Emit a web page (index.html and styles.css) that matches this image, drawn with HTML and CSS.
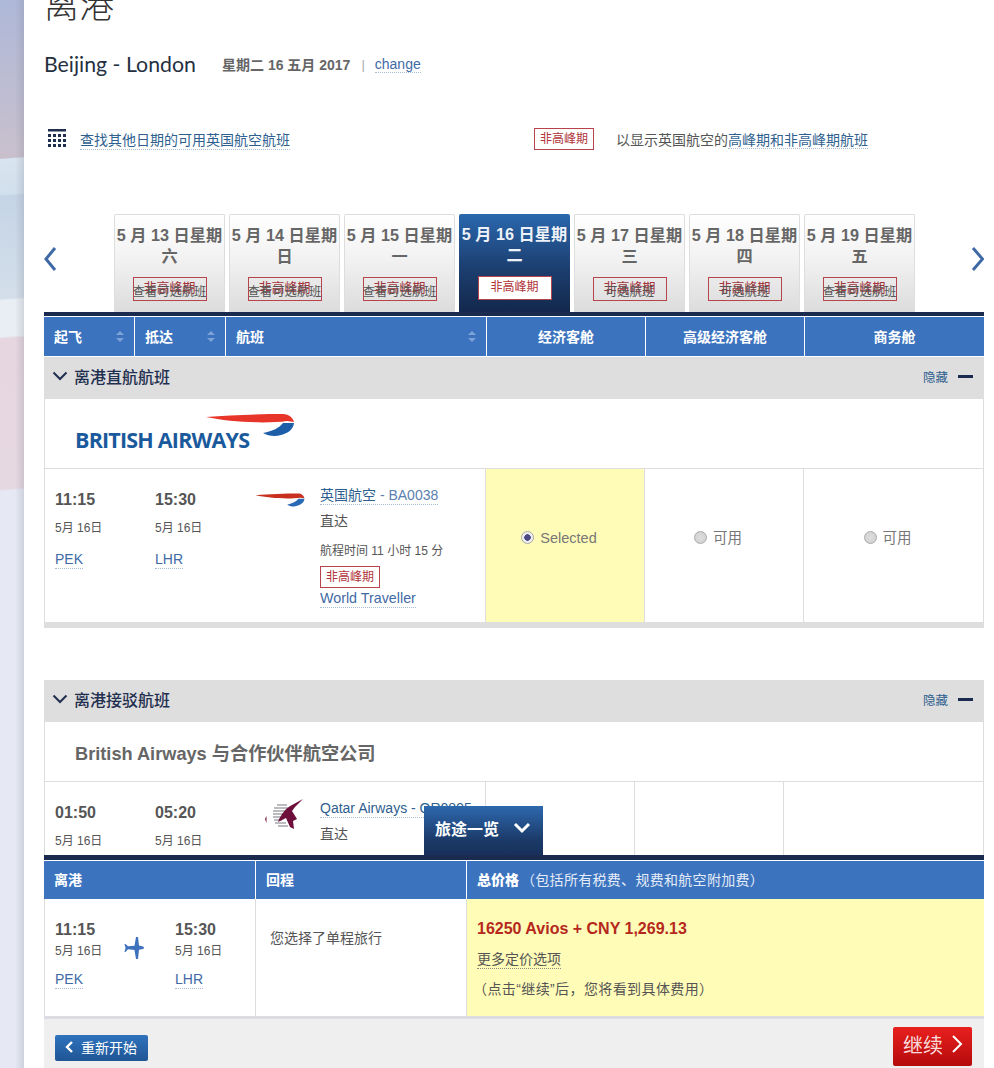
FILE: index.html
```html
<!DOCTYPE html>
<html lang="zh-CN">
<head>
  <meta charset="UTF-8" />
  <meta name="viewport" content="width=device-width, initial-scale=1" />
  <title>离港</title>
  <link rel="stylesheet" href="styles.css">
</head>
<body>
<div class="page">
  <div class="side"></div>
  <div class="main">

    <h1 class="title">离港</h1>

    <div class="route">
      <span class="route-name">Beijing - London</span>
      <span class="route-date">星期二 16 五月 2017</span>
      <span class="route-sep">|</span>
      <a class="link">change</a>
    </div>

    <div class="finder">
      <div class="finder-left">
        <svg class="cal" width="18" height="18" viewBox="0 0 18 18">
          <rect x="0" y="0" width="18" height="2.5" fill="#1f2f4f"/>
          <g fill="#1f2f4f">
            <rect x="0" y="5" width="3" height="3"/><rect x="5" y="5" width="3" height="3"/><rect x="10" y="5" width="3" height="3"/><rect x="15" y="5" width="3" height="3"/>
            <rect x="0" y="10" width="3" height="3"/><rect x="5" y="10" width="3" height="3"/><rect x="10" y="10" width="3" height="3"/><rect x="15" y="10" width="3" height="3"/>
            <rect x="0" y="15" width="3" height="3"/><rect x="5" y="15" width="3" height="3"/><rect x="10" y="15" width="3" height="3"/><rect x="15" y="15" width="3" height="3"/>
          </g>
        </svg>
        <a class="link link-dark">查找其他日期的可用英国航空航班</a>
      </div>
      <div class="finder-right">
        <span class="badge">非高峰期</span>
        <span class="finder-note">以显示英国航空的<a class="link link-dark">高峰期和非高峰期航班</a></span>
      </div>
    </div>

    <div class="dates">
      <svg class="arrow" width="14" height="26" viewBox="0 0 14 26"><path d="M11 2 L2 13 L11 24" fill="none" stroke="#3f6aa6" stroke-width="3"/></svg>
      <div class="tabs">
        <div class="tab">
          <div class="tab-date">5 月 13 日星期六</div>
          <div class="tab-box"><span>非高峰期</span><em>查看可选航班</em></div>
        </div>
        <div class="tab">
          <div class="tab-date">5 月 14 日星期日</div>
          <div class="tab-box"><span>非高峰期</span><em>查看可选航班</em></div>
        </div>
        <div class="tab">
          <div class="tab-date">5 月 15 日星期一</div>
          <div class="tab-box"><span>非高峰期</span><em>查看可选航班</em></div>
        </div>
        <div class="tab tab-active">
          <div class="tab-date">5 月 16 日星期二</div>
          <div class="tab-box"><span>非高峰期</span></div>
        </div>
        <div class="tab">
          <div class="tab-date">5 月 17 日星期三</div>
          <div class="tab-box"><span>非高峰期</span><em>可选航班</em></div>
        </div>
        <div class="tab">
          <div class="tab-date">5 月 18 日星期四</div>
          <div class="tab-box"><span>非高峰期</span><em>可选航班</em></div>
        </div>
        <div class="tab">
          <div class="tab-date">5 月 19 日星期五</div>
          <div class="tab-box"><span>非高峰期</span><em>查看可选航班</em></div>
        </div>
      </div>
      <svg class="arrow" width="14" height="26" viewBox="0 0 14 26"><path d="M3 2 L12.500 13 L3 24" fill="none" stroke="#3f6aa6" stroke-width="3"/></svg>
    </div>

    <div class="results">
      <div class="thead">
        <div class="th th-dep">起飞<i class="sort"></i></div>
        <div class="th th-arr">抵达<i class="sort"></i></div>
        <div class="th th-flight">航班<i class="sort"></i></div>
        <div class="th th-cabin">经济客舱</div>
        <div class="th th-cabin">高级经济客舱</div>
        <div class="th th-cabin th-last">商务舱</div>
      </div>

      <div class="group-head">
        <svg width="16" height="10" viewBox="0 0 16 10"><path d="M1.5 1.5 L8 8 L14.5 1.5" fill="none" stroke="#1f2f4f" stroke-width="2"/></svg>
        <span class="group-name">离港直航航班</span>
        <a class="group-hide">隐藏</a>
        <i class="minus"></i>
      </div>

      <div class="brand">
        <span class="ba-word">BRITISH AIRWAYS</span>
        <svg class="ba-mark" width="90" height="24" viewBox="0 0 90 24">
          <path d="M1 4 C25 2 55 1 78 1 C84 1 88 5 89 9 L82 8 C60 11 25 9 1 4 Z" fill="#e8352a"/>
          <path d="M89 10 C88 17 83 20 76 22 C70 24 63 23 58 20 C68 18 74 15 78 10 Z" fill="#1c5fa8"/>
        </svg>
      </div>

      <div class="flight">
        <div class="flight-info">
          <div class="stop">
            <div class="time">11:15</div>
            <div class="day">5月 16日</div>
            <a class="link code">PEK</a>
          </div>
          <div class="stop">
            <div class="time">15:30</div>
            <div class="day">5月 16日</div>
            <a class="link code">LHR</a>
          </div>
          <svg class="carrier" width="50" height="14" viewBox="0 0 90 24" preserveAspectRatio="none">
            <path d="M1 4 C25 2 55 1 78 1 C84 1 88 5 89 9 L82 8 C60 11 25 9 1 4 Z" fill="#c9301f"/>
            <path d="M89 10 C88 17 83 20 76 22 C70 24 63 23 58 20 C68 18 74 15 78 10 Z" fill="#2a69b4"/>
          </svg>
          <div class="detail">
            <a class="link link-dark flight-no">英国航空<span class="flight-code"> - BA0038</span></a>
            <div class="direct">直达</div>
            <div class="duration">航程时间 11 小时 15 分</div>
            <span class="badge badge-small">非高峰期</span>
            <a class="link fare">World Traveller</a>
          </div>
        </div>
        <div class="cabin cabin-eco cabin-selected"><i class="radio radio-on"></i>Selected</div>
        <div class="cabin cabin-eco"><i class="radio"></i>可用</div>
        <div class="cabin cabin-biz"><i class="radio"></i>可用</div>
      </div>
      <div class="group-foot"></div>

      <div class="group-head group-second">
        <svg width="16" height="10" viewBox="0 0 16 10"><path d="M1.5 1.5 L8 8 L14.5 1.5" fill="none" stroke="#1f2f4f" stroke-width="2"/></svg>
        <span class="group-name">离港接驳航班</span>
        <a class="group-hide">隐藏</a>
        <i class="minus"></i>
      </div>

      <div class="brand brand-text">British Airways 与合作伙伴航空公司</div>

      <div class="flight flight-cut">
        <div class="flight-info">
          <div class="stop">
            <div class="time">01:50</div>
            <div class="day">5月 16日</div>
          </div>
          <div class="stop">
            <div class="time">05:20</div>
            <div class="day">5月 16日</div>
          </div>
          <svg class="carrier-qr" width="42" height="34" viewBox="0 0 42 34">
            <path d="M3 23 L4.500 20 L4.500 27 Z" fill="#7a1238"/>
            <g stroke="#8f8f96" stroke-width="1.200">
              <path d="M15 9 H25"/><path d="M12 12 H26"/><path d="M11 15 H25"/><path d="M11 18 H22"/><path d="M11 21 H20"/><path d="M12 24 H20"/><path d="M13 27 H24"/><path d="M16 30 H26"/>
            </g>
            <path d="M41 3 L30 9 C24 12 19 18 16 26 L24 22 L28 31 L32 33 L31 25 L35 23 L30 15 L33 11 Z" fill="#6d0f3a"/>
          </svg>
          <div class="detail detail-cut">
            <a class="link link-dark flight-no">Qatar Airways - QR0895</a>
            <div class="direct">直达</div>
          </div>
        </div>
        <div class="cabin cabin-cut-a"></div>
        <div class="cabin cabin-cut-b"></div>
        <div class="cabin cabin-cut-c"></div>
      </div>
    </div>

    <div class="summary">
      <div class="trip-tab">旅途一览
        <svg width="18" height="12" viewBox="0 0 18 12"><path d="M2 2 L9 9 L16 2" fill="none" stroke="#fff" stroke-width="3"/></svg>
      </div>
      <div class="sum-head">
        <div class="sum-th sum-a">离港</div>
        <div class="sum-th sum-b">回程</div>
        <div class="sum-th sum-c"><b>总价格</b><span class="sum-note">（包括所有税费、规费和航空附加费）</span></div>
      </div>
      <div class="sum-body">
        <div class="sum-a sum-trip">
          <div class="sum-stop">
            <div class="time">11:15</div>
            <div class="day">5月 16日</div>
            <a class="link code">PEK</a>
          </div>
          <svg class="plane" width="20" height="22" viewBox="0 0 20 22">
            <path d="M12 0 L14 0 L15 8.5 L19 9.5 C20.300 10 20.300 11.500 19 12 L15 12.800 L14 22 L12 22 L10.500 13 L4 12.300 L1.500 15 L0.500 15 L1.500 11 L0.500 7 L1.500 7 L4 9.300 L10.500 8.700 Z" fill="#3f72bd"/>
          </svg>
          <div class="sum-stop">
            <div class="time">15:30</div>
            <div class="day">5月 16日</div>
            <a class="link code">LHR</a>
          </div>
        </div>
        <div class="sum-b sum-oneway">您选择了单程旅行</div>
        <div class="sum-c sum-price">
          <div class="price">16250 Avios + CNY 1,269.13</div>
          <a class="more">更多定价选项</a>
          <div class="price-note">（点击“继续”后，您将看到具体费用）</div>
        </div>
      </div>
      <div class="sum-foot"></div>
      <div class="actions">
        <a class="btn-back">
          <svg width="9" height="12" viewBox="0 0 9 12"><path d="M7 1 L2 6 L7 11" fill="none" stroke="#fff" stroke-width="2.400"/></svg>
          重新开始
        </a>
        <a class="btn-next">继续
          <svg width="12" height="20" viewBox="0 0 12 20"><path d="M2 2 L10 10 L2 18" fill="none" stroke="#fff" stroke-width="2"/></svg>
        </a>
      </div>
    </div>

  </div>
</div>
</body>
</html>
```

FILE: styles.css
```css
html, body {
  margin: 0;
  padding: 0;
  height: 100%;
  overflow: hidden;
  background: #fff;
  font-family: "Liberation Sans", "Noto Sans CJK SC", sans-serif;
  font-size: 14px;
  color: #555;
}

.page {
  display: flex;
  height: 1068px;
  overflow: hidden;
}

.side {
  width: 24px;
  flex: none;
  background:
    linear-gradient(90deg, rgba(120, 125, 140, 0) 15px, rgba(120, 125, 140, 0.12) 20px, rgba(120, 125, 140, 0.22) 24px),
    linear-gradient(176deg, #aeb8d8 0, #c9c0cd 158px, #d8e4ef 159px, #d2dfec 194px, #c5d4e6 196px, #d3dee9 298px, #e9eef4 300px, #e9eef4 336px, #e6d6df 338px, #e6d8e1 488px, #e6e9f3 490px, #e6e9f3 1068px);
}

.main {
  flex: 1;
  min-width: 0;
  padding: 0 10px 0 20px;
}

.title {
  margin: -16px 0 0;
  height: 44px;
  font-size: 35px;
  line-height: 44px;
  font-weight: 300;
  color: #333;
}

.link {
  color: #3f6aa6;
  text-decoration: none;
  border-bottom: 1px dotted #a9bcd6;
}

.link-dark {
  color: #2f5f8f;
}

.route {
  display: flex;
  align-items: center;
  height: 30px;
  margin-top: 21px;
  padding-bottom: 1px;
}

.route-name {
  font-family: Lato, sans-serif;
  font-size: 21.300px;
  color: #24303f;
  width: 178px;
}

.route-date {
  font-weight: bold;
  font-size: 14px;
  color: #666;
}

.route-sep {
  margin: 0 10px 0 11px;
  color: #aaa;
  font-size: 13px;
}

.finder {
  display: flex;
  align-items: center;
  height: 24px;
  margin-top: 47px;
  padding-bottom: 1px;
}

.finder-left {
  display: flex;
  align-items: center;
  width: 490px;
  padding-left: 4px;
  box-sizing: border-box;
}

.cal {
  margin-right: 14px;
  margin-top: -3px;
}

.finder-right {
  display: flex;
  align-items: center;
}

.finder-note {
  margin-left: 22px;
  color: #555;
}

.badge {
  display: inline-block;
  border: 1px solid #b7444a;
  color: #b03338;
  font-size: 12px;
  line-height: 20px;
  padding: 0 5px;
}

.dates {
  display: flex;
  align-items: center;
  justify-content: space-between;
  height: 98px;
  margin-top: 62px;
}

.dates .arrow {
  margin-top: -8px;
}

.tabs {
  display: flex;
  gap: 4px;
  height: 98px;
  margin-left: 56px;
  margin-right: 55px;
}

.tab {
  width: 111px;
  box-sizing: border-box;
  border: 1px solid #ddd;
  border-bottom: 0;
  border-radius: 2px 2px 0 0;
  background: linear-gradient(#fff, #f2f2f2 45%, #dcdcdc);
  text-align: center;
  color: #666;
  padding-top: 10px;
}

.tab-date {
  font-size: 16.200px;
  line-height: 21px;
  font-weight: bold;
  width: 108px;
  margin: 0 auto;
  word-break: break-all;
}

.tab-box {
  position: relative;
  width: 74px;
  height: 24px;
  box-sizing: border-box;
  margin: 10px auto 0;
  border: 1px solid #b7444a;
  color: #a3343c;
  font-size: 13px;
  line-height: 20px;
}

.tab-box em {
  position: absolute;
  left: -2px;
  right: -2px;
  top: 5px;
  font-style: normal;
  color: #555;
  font-size: 12.300px;
  line-height: 18px;
  white-space: nowrap;
}

.tab-active {
  border: 0;
  background: linear-gradient(#2a67ad, #1c3f70 55%, #13284c);
  color: #e8eef6;
  padding-top: 10px;
}

.tab-active .tab-date {
  color: #eef2f8;
}

.tab-active .tab-box {
  margin-top: 10px;
  background: #fff;
  font-size: 12px;
  color: #b03338;
}

.results {
  height: 539px;
  overflow: hidden;
  border-top: 4px solid #1b2b4f;
}

.thead {
  display: flex;
  gap: 1px;
  margin-top: 1px;
  height: 39px;
  margin-bottom: 1px;
}

.th {
  position: relative;
  box-sizing: border-box;
  background: #3b73bf;
  color: #fff;
  font-weight: bold;
  font-size: 14px;
  line-height: 41px;
  padding-left: 10px;
}

.th-dep, .th-arr {
  width: 90px;
}

.th-flight {
  width: 260px;
}

.th-cabin {
  width: 158px;
  text-align: center;
  padding-left: 0;
}

.th-last {
  width: 179px;
}

.sort {
  position: absolute;
  right: 10px;
  top: 14px;
  width: 0;
  height: 0;
  border-left: 4px solid transparent;
  border-right: 4px solid transparent;
  border-bottom: 4px solid #7fa3d6;
}

.sort::after {
  content: "";
  position: absolute;
  left: -4px;
  top: 7px;
  border-left: 4px solid transparent;
  border-right: 4px solid transparent;
  border-top: 4px solid #7fa3d6;
}

.group-head {
  display: flex;
  align-items: center;
  height: 42px;
  box-sizing: border-box;
  background: #dedede;
  padding: 0 11px 4px 8px;
  color: #1f2f4f;
}

.group-second {
  margin-top: 52px;
}

.group-name {
  margin-left: 6px;
  font-size: 16px;
  font-weight: 500;
  flex: 1;
}

.group-hide {
  color: #2f5f8f;
  font-size: 12.500px;
  margin-right: 10px;
}

.minus {
  width: 15px;
  height: 3px;
  background: #1b2b4f;
}

.brand {
  display: flex;
  align-items: flex-start;
  height: 70px;
  box-sizing: border-box;
  border-left: 1px solid #ddd;
  border-right: 1px solid #ddd;
  border-bottom: 1px solid #ddd;
  padding-left: 30px;
}

.ba-word {
  font-family: "Open Sans", sans-serif;
  font-weight: 700;
  font-size: 21.500px;
  line-height: 24px;
  letter-spacing: -0.800px;
  color: #1a5a9c;
  margin-top: 29px;
  width: 175px;
  flex: none;
  white-space: nowrap;
}

.ba-mark {
  margin-left: -45px;
  margin-top: 14px;
  flex: none;
}

.brand-text {
  height: 60px;
  align-items: center;
  font-size: 18.200px;
  font-weight: bold;
  color: #666;
}

.flight {
  display: flex;
  height: 153px;
  border-left: 1px solid #ddd;
  border-right: 1px solid #ddd;
}

.flight-info {
  display: flex;
  width: 440px;
  flex: none;
  box-sizing: border-box;
  padding: 21px 0 0 10px;
}

.stop {
  width: 100px;
}

.time {
  font-size: 16px;
  font-weight: bold;
  line-height: 20px;
  color: #555;
}

.day {
  font-size: 12px;
  line-height: 18px;
  margin-top: 9px;
  color: #555;
}

.code {
  display: inline-block;
  margin-top: 14px;
  font-size: 14px;
  line-height: 17px;
}

.carrier {
  margin-top: 3px;
  flex: none;
}

.detail {
  margin: -3px 0 0 15px;
}

.flight-no {
  font-size: 14px;
  line-height: 17px;
  display: inline-block;
  margin-top: -7px;
}

.flight-code {
  color: #5b7fb0;
}

.direct {
  font-size: 14px;
  line-height: 20px;
  margin-top: 6px;
  color: #555;
}

.duration {
  font-size: 12px;
  line-height: 18px;
  margin-top: 11px;
  color: #555;
}

.badge-small {
  display: block;
  width: 58px;
  box-sizing: content-box;
  padding: 0;
  text-align: center;
  margin-top: 6px;
  line-height: 20px;
}

.fare {
  display: inline-block;
  margin-top: 2px;
  font-size: 14.300px;
  line-height: 17px;
}

.cabin {
  box-sizing: border-box;
  border-left: 1px solid #ddd;
  padding: 59px 12px 0 0;
  text-align: center;
  font-size: 14.500px;
  line-height: 20px;
  color: #777;
}

.cabin-eco {
  width: 159px;
}

.cabin-biz {
  flex: 1;
}

.cabin-selected {
  background: #fffcb8;
}

.radio {
  display: inline-block;
  box-sizing: border-box;
  width: 13px;
  height: 13px;
  margin-right: 6px;
  vertical-align: -1px;
  border-radius: 50%;
  background: radial-gradient(#ddd, #cfcfcf);
  border: 1px solid #aaa;
}

.radio-on {
  background: radial-gradient(#4b4a86 0, #4b4a86 3px, #eee 3.500px);
}

.group-foot {
  height: 6px;
  background: #dedede;
}

.flight-cut {
  height: 74px;
}

.carrier-qr {
  margin: -7px 0 0 7px;
  flex: none;
}

.detail-cut {
  margin-left: 16px;
  white-space: nowrap;
}

.cabin-cut-a, .cabin-cut-b {
  width: 149px;
  padding: 0;
}

.cabin-cut-c {
  flex: 1;
  padding: 0;
}

.summary {
  position: relative;
  border-top: 5px solid #1b2b4f;
}

.trip-tab {
  position: absolute;
  left: 380px;
  top: -54px;
  width: 119px;
  height: 49px;
  box-sizing: border-box;
  padding: 0 0 6px 11px;
  display: flex;
  align-items: center;
  gap: 14px;
  background: linear-gradient(#2d68ae, #1b3a68 70%, #17305a);
  color: #fff;
  font-size: 16px;
  font-weight: bold;
}

.sum-head {
  display: flex;
  gap: 1px;
  margin-top: 1px;
  height: 38px;
}

.sum-th {
  box-sizing: border-box;
  background: #3b73bf;
  color: #fff;
  font-size: 14px;
  font-weight: bold;
  line-height: 38px;
  padding-left: 10px;
}

.sum-a {
  width: 211px;
  flex: none;
}

.sum-b {
  width: 210px;
  flex: none;
}

.sum-c {
  flex: 1;
}

.sum-note {
  font-weight: normal;
  color: #e4ecf7;
  margin-left: 2px;
  letter-spacing: 0.300px;
}

.sum-body {
  display: flex;
  height: 117px;
}

.sum-trip {
  display: flex;
  box-sizing: border-box;
  padding: 21px 0 0 10px;
  border-left: 1px solid #ddd;
  border-right: 1px solid #ddd;
  width: 212px;
}

.sum-stop {
  width: 69px;
}

.sum-stop .day {
  margin-top: 2px;
}

.sum-stop .code {
  margin-top: 11px;
}

.plane {
  margin: 17px 31px 0 0;
  flex: none;
}

.sum-oneway {
  box-sizing: border-box;
  padding: 29px 0 0 14px;
  width: 210px;
  line-height: 20px;
  color: #555;
}

.sum-price {
  box-sizing: border-box;
  padding: 21px 0 0 10px;
  background: #fffcb8;
  border-left: 1px solid #ddd;
}

.price {
  color: #b5281c;
  font-weight: bold;
  font-size: 16px;
  line-height: 18px;
}

.more {
  display: inline-block;
  margin-top: 12px;
  color: #555;
  line-height: 18px;
  border-bottom: 1px dotted #888;
}

.price-note {
  margin-top: 10px;
  margin-left: -4px;
  line-height: 20px;
  letter-spacing: 0.400px;
  color: #555;
}

.sum-foot {
  height: 3px;
  background: #dcdce2;
}

.actions {
  display: flex;
  justify-content: space-between;
  align-items: flex-start;
  height: 41px;
  padding: 8px 12px 0 11px;
  background: #efefef;
}

.btn-back {
  display: flex;
  align-items: center;
  gap: 7px;
  height: 26px;
  box-sizing: border-box;
  margin-top: 8px;
  padding: 0 11px 2px 10px;
  border-radius: 2px;
  background: linear-gradient(#2f73bd, #1f5595);
  color: #fff;
  font-size: 14px;
}

.btn-next {
  display: flex;
  align-items: center;
  gap: 8px;
  height: 39px;
  box-sizing: border-box;
  padding: 0 9px 5px 10px;
  border-radius: 2px;
  background: linear-gradient(#e8201e, #b50a0c);
  color: #f8dcdc;
  font-size: 20px;
}
```
